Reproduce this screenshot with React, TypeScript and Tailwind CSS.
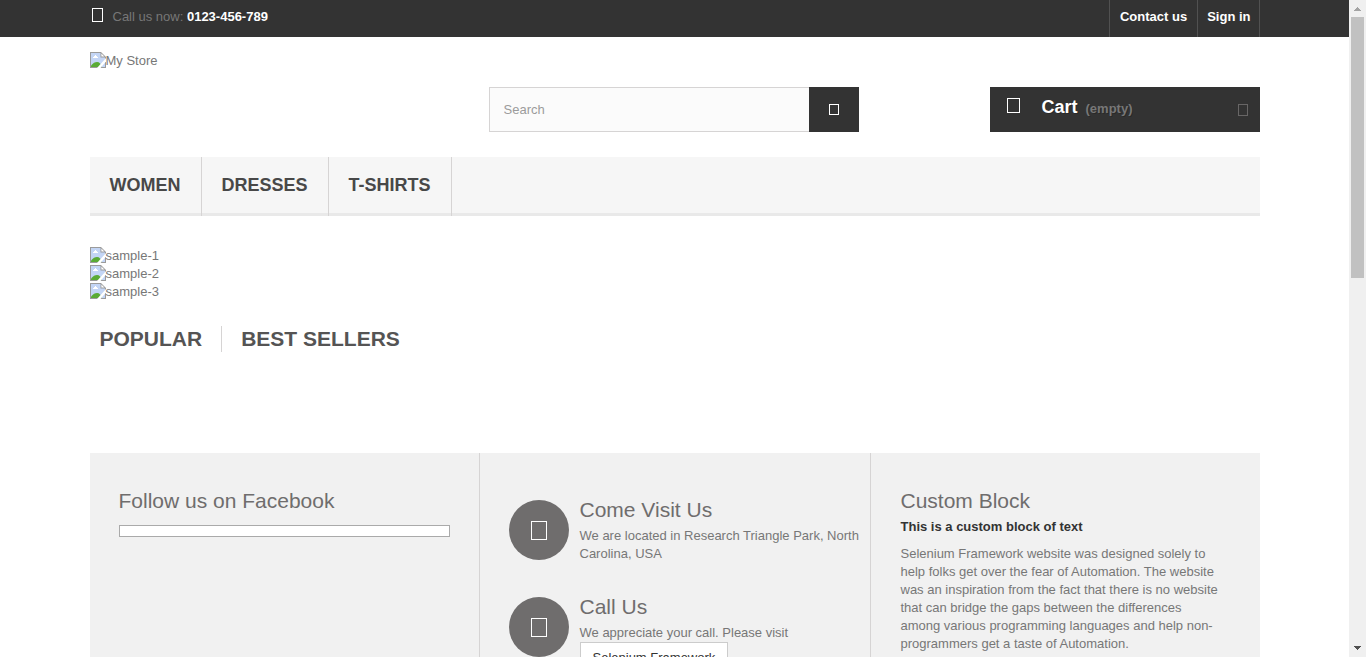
import React from "react";

function BoxGlyph({ className }: { className: string }) {
  return <span aria-hidden="true" className={`block shrink-0 border ${className}`} />;
}

function MissingImage({ alt }: { alt: string }) {
  return (
    <span className="flex items-start">
      <svg width="16" height="16" viewBox="0 0 16 16" className="shrink-0" aria-hidden="true">
        <path d="M0 0h11l5 5v11H0z" fill="#9b9b9b" />
        <path d="M1 1h9.5v4.5H15V15H1z" fill="#c3d5f5" />
        <path d="M11.4 1.6L14.4 4.6h-3z" fill="#fff" />
        <path d="M3 6h5V5H7V4H6V3H5v1H4v1H3z" fill="#fff" />
        <path d="M1 15v-1.5C3 11 5 10 7 10c2.500 0 4 2 5 5z" fill="#5aab35" />
        <path d="M16 6v3.500L10.500 16H7z" fill="#fff" />
      </svg>
      <span>{alt}</span>
    </span>
  );
}

function TopBar() {
  return (
    <nav className="bg-[#333]">
      <div className="mx-auto flex max-w-[1170px] justify-between">
        <p className="flex pt-2 pl-0.5">
          <BoxGlyph className="mr-2.5 h-3.5 w-[11px] border-white" />
          <span>
            Call us now: <strong className="text-white">0123-456-789</strong>
          </span>
        </p>
        <div className="flex border-r border-[#515151] font-bold text-white">
          <a href="#contact" className="border-l border-[#515151] px-2.5 pt-2 pb-[11px]">
            Contact us
          </a>
          <a href="#signin" className="border-l border-[#515151] pt-2 pr-2 pb-[11px] pl-[9px]">
            Sign in
          </a>
        </div>
      </div>
    </nav>
  );
}

function Header() {
  return (
    <div className="grid grid-cols-3 pt-[15px]">
      <a href="#home">
        <MissingImage alt="My Store" />
      </a>
      <form className="mt-[35px] flex h-[45px] pr-[11px] pl-[9px]" onSubmit={(e) => e.preventDefault()}>
        <input
          type="text"
          aria-label="Search"
          placeholder="Search"
          className="min-w-0 flex-1 border border-r-0 border-[#d6d4d4] bg-[#fbfbfb] px-3.5 outline-none placeholder:text-[#9c9b9b]"
        />
        <button
          type="submit"
          aria-label="Submit search"
          className="flex w-[50px] items-center justify-center bg-[#333]"
        >
          <BoxGlyph className="h-[11px] w-2.5 border-white" />
        </button>
      </form>
      <a
        href="#cart"
        className="mt-[35px] ml-auto flex h-[45px] w-[270px] items-center bg-[#333] pr-3 pl-[17px] font-bold [text-shadow:1px_1px_rgba(0,0,0,0.2)]"
      >
        <span className="flex items-start pb-1">
          <BoxGlyph className="mt-[3px] mr-[22px] h-[15px] w-[13px] border-white" />
          <span className="flex items-baseline gap-2">
            <span className="text-[18px] leading-[25px] text-white">Cart</span>
            <span>(empty)</span>
          </span>
        </span>
        <BoxGlyph className="ml-auto h-3 w-2.5 border-[#686666]" />
      </a>
    </div>
  );
}

const categories = ["WOMEN", "DRESSES", "T-SHIRTS"];
const slides = ["sample-1", "sample-2", "sample-3"];

function Store({ title, children }: { title: string; children: React.ReactNode }) {
  return (
    <div className="flex gap-[11px]">
      <span className="flex size-[60px] shrink-0 items-center justify-center rounded-full bg-[#6f6d6d]">
        <BoxGlyph className="h-[19px] w-4 border-white" />
      </span>
      <div className="min-w-0">
        <h3 className="mb-2 text-[21px] leading-[19px] text-[#6f6d6d]">{title}</h3>
        {children}
      </div>
    </div>
  );
}

function InfoBlocks() {
  return (
    <div className="mt-[101px] grid grid-cols-3 bg-[#f1f1f1]">
      <section className="border-r border-[#d6d4d4] px-[29px] pt-9">
        <h2 className="text-[21px] leading-6 text-[#6f6d6d]">Follow us on Facebook</h2>
        <div className="mt-3 h-3 border border-[#aaa] bg-white" />
      </section>
      <section className="pt-[47px] pb-12 pl-[29px]">
        <div className="flex flex-col gap-[34px]">
          <Store title="Come Visit Us">
            <p>We are located in Research Triangle Park, North Carolina, USA</p>
          </Store>
          <Store title="Call Us">
            <p>We appreciate your call. Please visit</p>
            <a
              href="#framework"
              className="inline-block border border-[#ccc] bg-white px-3 py-1.5 text-[#333]"
            >
              Selenium Framework
            </a>
          </Store>
        </div>
      </section>
      <section className="border-l border-[#d6d4d4] pt-9 pr-10 pl-[30px]">
        <h2 className="text-[21px] leading-6 text-[#6f6d6d]">Custom Block</h2>
        <p className="mt-[5px] font-bold text-[#333]">This is a custom block of text</p>
        <p className="mt-[9px]">
          Selenium Framework website was designed solely to help folks get over the fear of
          Automation. The website was an inspiration from the fact that there is no website that
          can bridge the gaps between the differences among various programming languages and help
          non-programmers get a taste of Automation.
        </p>
      </section>
    </div>
  );
}

function ScrollBar() {
  return (
    <div aria-hidden="true" className="flex w-[17px] shrink-0 flex-col items-center bg-[#f0f0f0]">
      <svg width="17" height="17" viewBox="0 0 17 17" className="shrink-0">
        <path d="M5 11h7v-1h-1V9h-1V8H9V7H8v1H7v1H6v1H5z" fill="#a3a3a3" />
      </svg>
      <span className="w-[13px] flex-[261] bg-[#c1c1c1]" />
      <span className="flex-[362]" />
      <svg width="17" height="17" viewBox="0 0 17 17" className="shrink-0">
        <path d="M5 6h7v1h-1v1h-1v1H9v1H8V9H7V8H6V7H5z" fill="#505050" />
      </svg>
    </div>
  );
}

export default function App() {
  return (
    <div className="flex h-screen bg-white font-['Liberation_Sans',Arial,sans-serif] text-[13px] leading-[18px] text-[#777]">
      <div className="min-w-0 flex-1 overflow-hidden">
        <TopBar />
        <div className="mx-auto max-w-[1170px]">
          <Header />
          <nav className="mt-[25px] flex bg-[#f6f6f6]">
            {categories.map((name) => (
              <a
                key={name}
                href={`#${name.toLowerCase()}`}
                className="border-r border-[#d6d4d4] text-[18px] leading-[22px] font-bold text-[#484848]"
              >
                <span className="block border-b-3 border-[#e9e9e9] px-5 pt-[17px] pb-[17px]">{name}</span>
              </a>
            ))}
            <span className="flex-1 border-b-3 border-[#e9e9e9]" />
          </nav>
          <ul className="mt-[31px]">
            {slides.map((name) => (
              <li key={name}>
                <a href={`#${name}`}>
                  <MissingImage alt={name} />
                </a>
              </li>
            ))}
          </ul>
          <div className="mt-[25px] flex text-[21px] leading-[26px] font-bold text-[#555454]">
            <a href="#popular" className="border-r border-[#d6d4d4] pr-[19px] pl-2.5">
              POPULAR
            </a>
            <a href="#bestsellers" className="pl-[19px]">
              BEST SELLERS
            </a>
          </div>
          <InfoBlocks />
        </div>
      </div>
      <ScrollBar />
    </div>
  );
}
